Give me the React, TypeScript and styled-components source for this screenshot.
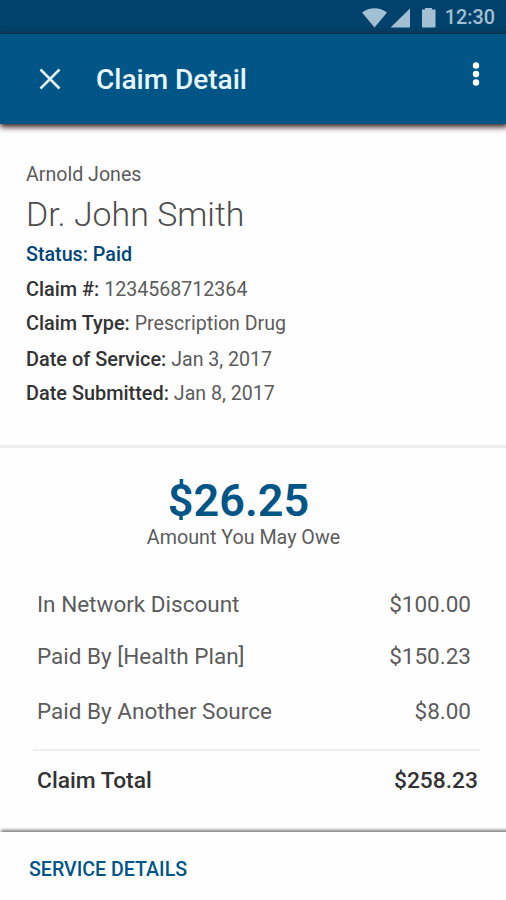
import { FC, ReactNode } from "react";
import styled, { createGlobalStyle } from "styled-components";

const colors = {
  primary: "#005587",
  primaryDark: "#00426b",
  link: "#00558a",
  statusIcon: "#a3bfd3",
  text: "#333333",
  textLight: "#5c5c5c",
  divider: "#eeeeee",
};

interface DetailItem {
  label: string;
  value: string;
  height: number;
}

interface AmountItem {
  label: string;
  value: string;
  height: number;
}

const details: DetailItem[] = [
  { label: "Claim #:", value: "1234568712364", height: 34 },
  { label: "Claim Type:", value: "Prescription Drug", height: 34 },
  { label: "Date of Service:", value: "Jan 3, 2017", height: 38 },
  { label: "Date Submitted:", value: "Jan 8, 2017", height: 30 },
];

const amounts: AmountItem[] = [
  { label: "In Network Discount", value: "$100.00", height: 52 },
  { label: "Paid By [Health Plan]", value: "$150.23", height: 55 },
  { label: "Paid By Another Source", value: "$8.00", height: 56 },
];

const StatusIcons: FC = () => (
  <svg width="74" height="20" viewBox="0 0 74 20" fill={colors.statusIcon}>
    <path d="M0 4.5C7-1.2 18-1.2 25 4.5L12.5 19.5Z" />
    <path d="M28.5 19.5L48 0.5V19.5Z" />
    <path d="M63 0h7v1.5h3.5v18h-13.5v-18h3Z" />
  </svg>
);

const CloseIcon: FC = () => (
  <svg width="22" height="22" viewBox="0 0 22 22" fill="none">
    <path d="M1.5 1.5L20.5 20.5M20.5 1.5L1.5 20.5" stroke="#e6f7ff" strokeWidth="2.5" />
  </svg>
);

const MoreIcon: FC = () => (
  <svg width="8" height="26" viewBox="0 0 8 26" fill="#ffffff">
    <circle cx="4" cy="4.5" r="3.2" />
    <circle cx="4" cy="13" r="3.2" />
    <circle cx="4" cy="21.5" r="3.2" />
  </svg>
);

const Detail: FC<{ label: string; height: number; children: ReactNode }> = ({
  label,
  height,
  children,
}) => (
  <DetailRow $height={height}>
    <DetailLabel>{label}</DetailLabel> {children}
  </DetailRow>
);

export default function App() {
  return (
    <Screen>
      <GlobalStyle />
      <StatusBar>
        <StatusIcons />
        <Clock>12:30</Clock>
      </StatusBar>
      <AppBar>
        <IconButton aria-label="Close">
          <CloseIcon />
        </IconButton>
        <Title>Claim Detail</Title>
        <IconButton aria-label="More options">
          <MoreIcon />
        </IconButton>
      </AppBar>
      <Summary>
        <Member>Arnold Jones</Member>
        <Provider>Dr. John Smith</Provider>
        <Status>Status: Paid</Status>
        {details.map(({ label, value, height }) => (
          <Detail key={label} label={label} height={height}>
            {value}
          </Detail>
        ))}
      </Summary>
      <Balance>
        <Owed>$26.25</Owed>
        <OwedLabel>Amount You May Owe</OwedLabel>
      </Balance>
      <Amounts>
        {amounts.map(({ label, value, height }) => (
          <AmountRow key={label} $height={height}>
            <span>{label}</span>
            <span>{value}</span>
          </AmountRow>
        ))}
        <TotalRow>
          <span>Claim Total</span>
          <span>$258.23</span>
        </TotalRow>
      </Amounts>
      <Footer>
        <FooterLink>SERVICE DETAILS</FooterLink>
      </Footer>
    </Screen>
  );
}

const GlobalStyle = createGlobalStyle`
  * {
    box-sizing: border-box;
  }

  body {
    margin: 0;
    background-color: #ffffff;
    font-family: Roboto, "Liberation Sans", sans-serif;
  }
`;

const Screen = styled.div`
  display: flex;
  flex-direction: column;
  width: 506px;
  height: 900px;
  overflow: hidden;
  background-color: #fefefe;
  color: ${colors.textLight};
  white-space: nowrap;
`;

const StatusBar = styled.div`
  display: flex;
  align-items: center;
  justify-content: flex-end;
  gap: 9px;
  height: 34px;
  padding: 1px 11px 0 0;
  background-color: ${colors.primaryDark};
`;

const Clock = styled.span`
  color: ${colors.statusIcon};
  font-size: 19.8px;
  line-height: 34px;
  font-weight: 500;
`;

const AppBar = styled.header`
  display: flex;
  align-items: center;
  flex-shrink: 0;
  height: 90px;
  padding: 0 26px 0 39px;
  background-color: ${colors.primary};
  box-shadow: 1px 2px 6px 1px rgba(40, 15, 15, 0.95);
`;

const IconButton = styled.button`
  display: flex;
  padding: 0;
  border: 0;
  background: none;

  &:last-child {
    margin-bottom: 10px;
  }
`;

const Title = styled.h1`
  flex: 1;
  margin: 0 0 0 35px;
  color: #e6f7ff;
  font-size: 28px;
  font-weight: 500;
`;

const Summary = styled.section`
  flex-shrink: 0;
  height: 324px;
  padding: 34px 26px 0;
  border-bottom: 3px solid ${colors.divider};
  font-size: 19.6px;
`;

const Member = styled.div`
  line-height: 33px;
`;

const Provider = styled.h2`
  margin: 0;
  color: #4d4d4d;
  font-size: 33.9px;
  line-height: 47px;
  font-weight: 300;
`;

const Status = styled.div`
  margin-bottom: 2px;
  color: #00467a;
  font-size: 19.7px;
  line-height: 33px;
  font-weight: 500;
`;

const DetailRow = styled.div<{ $height: number }>`
  line-height: ${({ $height }) => $height}px;
`;

const DetailLabel = styled.span`
  color: ${colors.text};
  font-size: 19.9px;
  font-weight: 500;
`;

const Balance = styled.section`
  display: flex;
  flex-direction: column;
  align-items: center;
  padding: 27px 29px 0 0;
`;

const Owed = styled.strong`
  color: ${colors.primary};
  font-size: 45px;
  line-height: 52px;
  font-weight: 600;
`;

const OwedLabel = styled.span`
  margin-left: 10px;
  font-size: 19.7px;
  line-height: 22px;
`;

const Amounts = styled.section`
  flex-shrink: 0;
  height: 283px;
  padding: 29px 26px 0 33px;
  font-size: 22.5px;
`;

const AmountRow = styled.div<{ $height: number }>`
  display: flex;
  justify-content: space-between;
  height: ${({ $height }) => $height}px;
  padding: 0 9px 0 4px;
  line-height: 52px;
`;

const TotalRow = styled.div`
  display: flex;
  justify-content: space-between;
  padding: 0 2px 0 4px;
  border-top: 2px solid ${colors.divider};
  margin-top: 8px;
  color: ${colors.text};
  font-size: 22.8px;
  line-height: 60px;
  font-weight: 500;
`;

const Footer = styled.footer`
  flex: 1;
  padding: 21px 29px 0;
  background-color: #fefefe;
  box-shadow: 2px -1px 3px 1px rgba(0, 0, 0, 0.5);
`;

const FooterLink = styled.a`
  color: ${colors.link};
  font-size: 19.6px;
  line-height: 34px;
  font-weight: 500;
`;
